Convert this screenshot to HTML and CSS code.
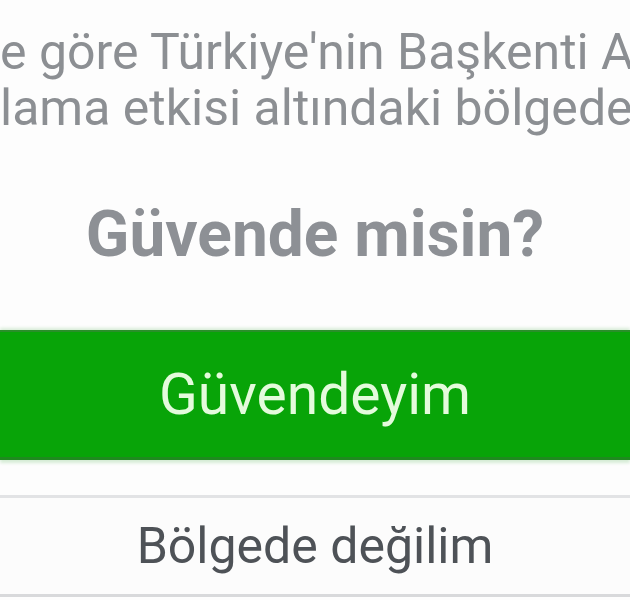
FILE: index.html
```html
<!DOCTYPE html>
<html lang="tr">
<head>
    <meta charset="UTF-8">
    <meta name="viewport" content="width=device-width, initial-scale=1.0">
    <title>Güvende misin?</title>
    <link rel="stylesheet" href="styles.css">
</head>
<body>
    <div class="screen">
        <!-- Message text is cropped on both sides in the screenshot -->
        <p class="message">
            <span class="line">e göre Türkiye'nin Başkenti Ankara'daki</span>
            <span class="line">lama etkisi altındaki bölgedesin.</span>
        </p>

        <h1 class="title">Güvende misin?</h1>

        <div class="actions">
            <button class="btn btn-safe">Güvendeyim</button>
            <button class="btn btn-away">Bölgede değilim</button>
        </div>
    </div>
</body>
</html>
```

FILE: styles.css
```css
body, html {
    margin: 0;
    height: 100%;
    overflow: hidden;
    background-color: #fdfdfd;
    font-family: Roboto, "Noto Sans", Arial, sans-serif;
}
.screen {
    width: 630px;
    height: 600px;
    overflow: hidden;
}
.message {
    margin: 0;
    padding-top: 24px;
    font-size: 50px;
    line-height: 56px;
    color: #8c8f93;
    white-space: nowrap;
    overflow: hidden;
}
.line {
    display: block;
}
.title {
    margin: 67px 0 0;
    font-size: 64px;
    line-height: 64px;
    font-weight: bold;
    color: #8d9095;
    text-align: center;
}
.actions {
    display: flex;
    flex-direction: column;
    margin-top: 63px;
    gap: 35px;
}
.btn {
    display: block;
    width: 100%;
    margin: 0;
    font-family: inherit;
    cursor: pointer;
}
.btn-safe {
    height: 130px;
    font-size: 57px;
    color: #e4fbdc;
    background-color: #08a408;
    border: none;
    border-top: 2px solid #2a8f2a;
    border-bottom: 3px solid #1f8a1f;
    box-shadow: 0 -2px 3px #d8ecd8, 0 3px 3px #d6ecd6;
}
.btn-away {
    height: 102px;
    font-size: 50px;
    color: #4e5257;
    background-color: #fcfcfc;
    border: none;
    border-top: 3px solid #e2e3e5;
    border-bottom: 3px solid #d8d9db;
}
```
